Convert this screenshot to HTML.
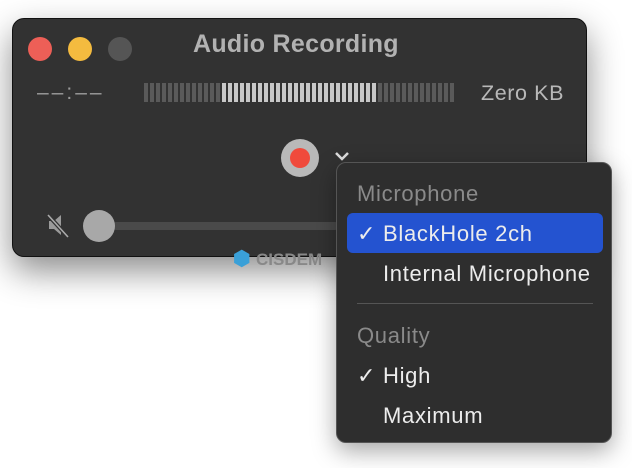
<!DOCTYPE html><html><head><style>
body{margin:0;width:632px;height:468px;background:#fff;position:relative;overflow:hidden;font-family:"Liberation Sans",sans-serif}
.win{position:absolute;left:12px;top:18px;width:575px;height:239px;background:#323232;border:1px solid #111;border-radius:12px;box-shadow:0 14px 34px rgba(0,0,0,.45);box-sizing:border-box}
.dot{position:absolute;top:18px;width:24px;height:24px;border-radius:50%}
.t{position:absolute;color:#a9a9a9}
.bars{position:absolute;left:144px;top:83px;height:19px;width:310px;display:flex;gap:2px}
.bars i{flex:0 0 4px;height:19px;background:#5a5a5a}
.bars i.l{background:#c8c8c8}
.menu{position:absolute;left:336px;top:162px;width:276px;height:281px;background:#2e2e2e;border:1px solid #555;border-radius:10px;box-shadow:0 8px 24px rgba(0,0,0,.35);box-sizing:border-box;color:#ececec;font-size:22px;letter-spacing:0.7px}
.menu div{position:absolute;left:46px;white-space:nowrap}
.menu .h{left:20px;color:#8a8a8a}
.ck{position:absolute;left:20px}
</style></head><body>
<div class="win">
<div class="dot" style="left:15px;background:#ed5f57"></div>
<div class="dot" style="left:55px;background:#f4bb3f"></div>
<div class="dot" style="left:95px;background:#555"></div>
<div class="t" style="left:180px;top:11px;font-size:25px;font-weight:bold;color:#b2b2b2;letter-spacing:0.3px">Audio Recording</div>
<div class="t" style="left:24px;top:62px;font-size:21px;color:#9a9a9a;letter-spacing:3px">––:––</div>
<div class="t" style="left:468px;top:62px;font-size:21.5px;color:#b8b8b8;letter-spacing:0.6px">Zero KB</div>
</div>
<div class="bars" id="b"></div>
<div style="position:absolute;left:281px;top:139px;width:38px;height:38px;border-radius:50%;background:#b9b9b9"></div>
<div style="position:absolute;left:290px;top:148px;width:20px;height:20px;border-radius:50%;background:#f04a3c"></div>
<svg style="position:absolute;left:333px;top:150px" width="18" height="12"><path d="M3 3l6 6 6-6" stroke="#ddd" stroke-width="2.5" fill="none"/></svg>
<div style="position:absolute;left:113px;top:222px;width:225px;height:8px;background:#4a4a4a;border-radius:3px"></div>
<div style="position:absolute;left:83px;top:210px;width:32px;height:32px;border-radius:50%;background:#a8a8a8"></div>
<svg style="position:absolute;left:45px;top:212px" width="26" height="28"><path d="M4 9h5l7-6v20l-7-6H4z" fill="#9a9a9a"/><path d="M3 3l20 22" stroke="#323232" stroke-width="4"/><path d="M3 3l20 22" stroke="#aaa" stroke-width="1.6"/></svg>
<div style="position:absolute;left:233px;top:246px;color:#3aa0d8;font-size:20px;font-weight:bold">&#11042; <span style="color:#888;font-size:17px">CISDEM</span></div>
<div class="menu">
<div class="h" style="top:18px">Microphone</div>
<div style="left:10px;top:50px;width:256px;height:40px;background:#2453d0;border-radius:6px"></div>
<span class="ck" style="top:58px">✓</span><div style="top:58px">BlackHole 2ch</div>
<div style="top:98px">Internal Microphone</div>
<div style="left:20px;top:140px;width:236px;height:1px;background:#555"></div>
<div class="h" style="top:160px">Quality</div>
<span class="ck" style="top:200px">✓</span><div style="top:200px">High</div>
<div style="top:240px">Maximum</div>
</div>
<script>
var b=document.getElementById('b'),h='';for(var i=0;i<52;i++){var x=i*6;h+='<i class="'+(x>=76&&x<232?'l':'')+'"></i>'}b.innerHTML=h;
</script>
</body></html>
